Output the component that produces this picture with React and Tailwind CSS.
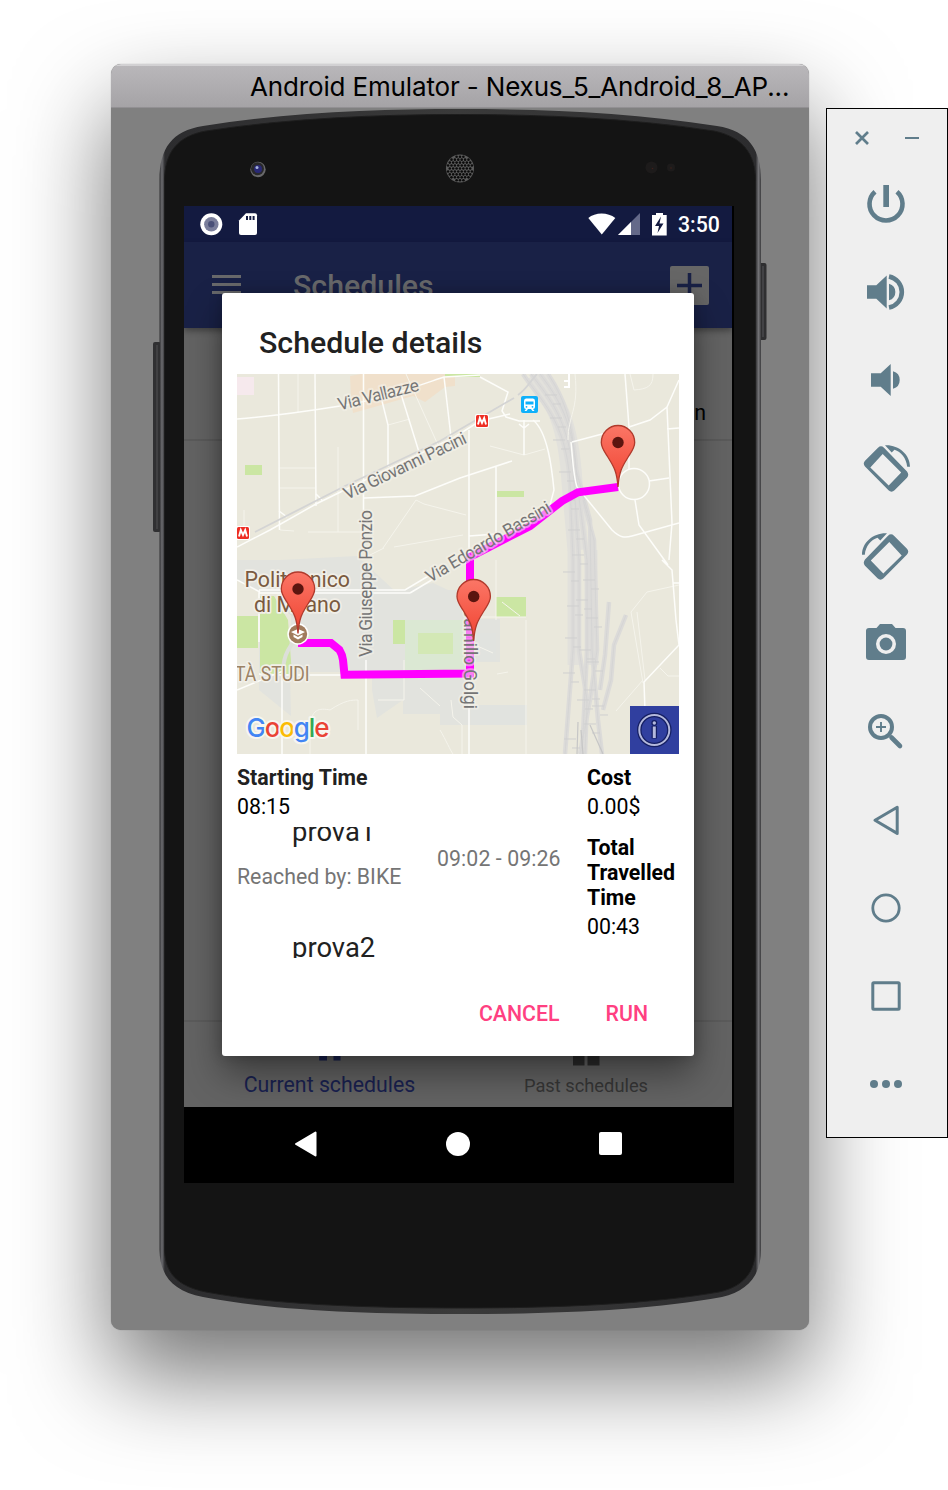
const steel = '#607d8b';

function Pin({ x, y }) {
  return (
    <g transform={`translate(${x} ${y})`}>
      <path d="M0 0C-1.2 -17 -5 -21.500 -10.500 -30.500C-14 -36 -16.700 -39.500 -16.700 -44.500A16.700 17 0 0 1 16.700 -44.500C16.700 -39.500 14 -36 10.500 -30.500C5 -21.500 1.200 -17 0 0Z" fill="url(#pin)" stroke="#b03a2c" strokeWidth="1.300" />
      <circle cx="0" cy="-44.500" r="5.700" fill="#5b150f" />
    </g>
  );
}

function Metro({ x, y }) {
  return (
    <g transform={`translate(${x} ${y})`}>
      <rect x="-7" y="-7" width="14" height="14" rx="2" fill="#fff" />
      <rect x="-6" y="-6" width="12" height="12" rx="1.500" fill="#ee2e24" />
      <path d="M-4 3.500L-2.200 -3L0 2L2.200 -3L4 3.500" fill="none" stroke="#fff" strokeWidth="1.900" />
    </g>
  );
}

function Rails() {
  const beds = [
    'M523 374C540 400 566 420 570 482L573 560V650L565 754',
    'M531 374C549 398 570 420 574 482L579 560V650L587 700L585 754',
    'M540 374C558 398 574 420 577 482L587 560V650L582 754',
    'M548 374C562 395 573 420 576 470L590 520L592 650L598 720L602 754',
    'M583 500L594 540L597 650L590 700L580 754',
    'M626 615L614 645L611 680L603 710',
    'M609 602L605 655L600 690',
  ];
  const ties = [[551, 395], [556, 418], [559, 440], [565, 472], [569, 500], [574, 530], [578, 555], [569, 572], [589, 580], [582, 600], [573, 606], [592, 618], [571, 638], [585, 650], [593, 662], [569, 673], [590, 690], [583, 700], [598, 706], [570, 739], [590, 724]];
  return (
    <g fill="none">
      <path d="M535 374C552 398 568 415 572 482L578 550" stroke="#e2e1dc" strokeWidth="21" />
      <path d="M574 550V665M591 550L592 665" stroke="#e2e1dc" strokeWidth="13" />
      {beds.map((d) => <path key={d} d={d} stroke="#dcdbd9" strokeWidth="4.500" />)}
      {beds.map((d) => <path key={d} d={d} stroke="#d3d3d3" strokeWidth=".8" />)}
      {ties.map(([x, y]) => <path key={`${x}-${y}`} d={`M${x - 6} ${y}h12M${x + 2} ${y + 9}h8`} stroke="#cfcfcf" strokeWidth="1" />)}
      <path d="M578 722L577 754M581 730L583 754M590 725L603 754" stroke="#c6c6c6" strokeWidth="1.200" />
    </g>
  );
}

const label = { fontFamily: 'Roboto, sans-serif', paintOrder: 'stroke', strokeLinejoin: 'round' };

function CityMap() {
  return (
    <svg className="block h-[380px] w-[442px]" viewBox="237 374 442 380">
      <defs>
        <linearGradient id="pin" x1="0" y1="0" x2="0" y2="1">
          <stop offset="0" stopColor="#fb7666" />
          <stop offset="1" stopColor="#f04331" />
        </linearGradient>
      </defs>
      <rect x="237" y="374" width="442" height="380" fill="#eae8dc" />
      <path d="M280 560L357 556L395 591L433 583L448 590H471V619H500V662H471V725H440V714H403V700L377 718L372 690V672H290L291 716L259 690V640H291V592H259L237 580V560Z" fill="#e2e3de" />
      <path d="M471 705H527V725H471ZM471 633H496V661H471Z" fill="#e1e3df" />
      <path d="M237 377H254V395H237Z" fill="#f6e9ed" />
      <path d="M350 376L361 374H455V386L445 387L425 402L413 396L353 413L351 399Z" fill="#f0e0cb" />
      <path d="M445 374H480V377H445ZM245 465H262V475H245ZM497 491H524V497H497ZM496 597H526V617H496ZM237 616H258V648H237ZM260 596H274L288 620L292 674H260ZM393 620H405V644H393Z" fill="#cbe6a3" />
      <path d="M405 620H464V672H405Z" fill="#dbe8d3" />
      <path d="M418 633H453V654H418Z" fill="#d3e8b5" />
      <path d="M283 600C287 617 300 612 298 625C299 645 283 643 283 674" fill="none" stroke="#dddfd9" strokeWidth="4" />
      <Rails />
      <g fill="none" stroke="#f5f4ec" strokeWidth="1">
        <path d="M298 374V412M338 447V532M280 468H315M280 488H315M244 510V532M280 530L294 531M308 532H363M406 374L438 445M388 425L410 419M383 548L416 500L424 504L466 515M394 547L463 535M384 548L366 557M490 446L524 455L545 449M575 374C579 410 568 415 568 440M630 374L634 390C648 389 653 386 653 374M404 660V700H378M420 688L440 706M310 754V730C310 708 320 708 330 710C345 700 352 700 358 700V730M440 730C446 740 450 750 453 754M497 674L508 672M526 620V754M496 560V620M526 617H475M502 602L520 616M616 711L643 680M679 585L647 592L631 612L643 683M637 612L645 680M660 668L668 676H679M451 700L453 717L462 725V754M475 645L493 653" />
      </g>
      <g fill="none" stroke="#fdfdfa" strokeWidth="1.500">
        <path d="M278.500 374L279.500 530M315 374L316 506M363.500 374V510M366 660V754M237 419C275 416 315 410 340 406C380 400 420 385 444 377L480 375M382 401L388 425V467M401 394L419 452M444 377L451 437M480 377L508 392L502 411L506 417L519 421L540 421" />
        <path d="M364 498L415 496L460 478L512 461M496 467V534L469 536M469 430V754M524 420V455M519 424L524 428L529 424M533 420C548 432 552 470 554 490L550 505M625 374L629 427V470M572 442L606 433M571 442C573 460 573 475 577 487L612 530C620 538 625 538 632 536L679 523M629 427L650 420L667 407L679 380M667 407L672 523L669 560M617 483L634 480M649 481L669 478M635 500L639 525L668 565M667 429L679 428M662 560L672 570L676 620L679 645L644 682L645 711M673 583H679" />
        <path d="M237 547L270 530L316 504L363 481L453 438L480 421L510 414M279 511L287 517M316 494L322 500M259 593H410M259 590H405L430 575M259 592V642M237 580L260 592M410 593L435 578M282 676V754M259 674L283 675H345M237 690L283 671" />
        <circle cx="634" cy="484" r="15.500" fill="#eae8dc" />
      </g>
      <path d="M255 532L345 486L440 441L514 398M518 395C528 388 530 381 537 374" fill="none" stroke="#d4d4d4" strokeWidth="1.800" />
      <path d="M569 374V387H564M564 381H569" fill="none" stroke="#fff" strokeWidth="2" />
      <path d="M298 643H331C340 650 342 655 343 660L344.500 675L470 673.500V560L560 499Q566 495 578 492.500L618 487.500" fill="none" stroke="none" />
      <path d="M298 643H331L339.500 650Q342.500 655 343 660L344.500 674.700L470 673.500V557L500 541.500L530 526L562 501L578 492.300L618 487" fill="none" stroke="#ff00ff" strokeWidth="8" />
      <g style={label} fill="#757575" stroke="#f4f2ea" strokeOpacity=".55" strokeWidth="4" fontSize="17.500">
        <text transform="translate(339.500 410.500) rotate(-14)" textLength="83">Via Vallazze</text>
        <text transform="translate(347 500) rotate(-25.500)" textLength="134">Via Giovanni Pacini</text>
        <text transform="translate(371.500 657) rotate(-90)" textLength="147">Via Giuseppe Ponzio</text>
        <text transform="translate(430 583) rotate(-30.500)" textLength="142">Via Edoardo Bassini</text>
        <text transform="translate(464 607) rotate(90)" textLength="102" lengthAdjust="spacingAndGlyphs">Camillo Golgi</text>
      </g>
      <g style={label} fontSize="21.500" stroke="#f1efe8" strokeWidth="3.500">
        <text x="244.500" y="586.500" textLength="105.500" lengthAdjust="spacingAndGlyphs" fill="#7a5a40">Politecnico</text>
        <text x="254" y="612" textLength="87" lengthAdjust="spacingAndGlyphs" fill="#7a5a40">di Milano</text>
        <text x="235" y="680.500" textLength="74.500" lengthAdjust="spacingAndGlyphs" fill="#9b8265" fontSize="20">TÀ STUDI</text>
      </g>
      <circle cx="298" cy="634" r="10.700" fill="#fff" />
      <circle cx="298" cy="634" r="9.200" fill="#a17c5e" />
      <path d="M291 632L298 629L305 632L298 635.500ZM293.500 634.500L298 637L302.500 634.500V637L298 639.500L293.500 637Z" fill="#fff" />
      <Metro x="243" y="533" />
      <Metro x="482" y="421" />
      <rect x="521" y="396" width="17" height="17" rx="2" fill="#0fb0fa" />
      <path d="M526 398.500H533Q535 398.500 535 401V407Q535 409 533 409L534.500 411H532.500L531 409H528L526.500 411H524.500L526 409Q524 409 524 407V401Q524 398.500 526 398.500Z" fill="#fff" />
      <path d="M525.500 401.500H533.500V404.500H525.500Z" fill="#0fb0fa" />
      <circle cx="526.500" cy="406.800" r=".9" fill="#0fb0fa" />
      <circle cx="532.500" cy="406.800" r=".9" fill="#0fb0fa" />
      <Pin x={618} y={487} />
      <Pin x={298} y={633.500} />
      <Pin x={473.700} y={641} />
      <text x="246.500" y="737" fontSize="26" fontWeight="500" textLength="83" style={{ ...label, fontFamily: 'Inter, sans-serif' }} stroke="#f7f6f0" strokeWidth="4">
        <tspan fill="#4285f4">G</tspan><tspan fill="#ea4335">o</tspan><tspan fill="#fbbc05">o</tspan><tspan fill="#4285f4">g</tspan><tspan fill="#34a853">l</tspan><tspan fill="#ea4335">e</tspan>
      </text>
      <rect x="630" y="706" width="49" height="48" fill="#303f9f" />
      <g fill="none" stroke="#151f63">
        <circle cx="654.300" cy="730" r="15" strokeWidth="4.500" />
        <path d="M654.300 726V738.500" strokeWidth="5.500" />
        <circle cx="654.300" cy="723" r="2" strokeWidth="2" />
      </g>
      <circle cx="654.300" cy="730" r="15" fill="none" stroke="#b4b9dc" strokeWidth="2" />
      <path d="M654.300 726.500V738" stroke="#b4b9dc" strokeWidth="3" />
      <circle cx="654.300" cy="723" r="1.700" fill="#b4b9dc" />
    </svg>
  );
}

function PhoneBody() {
  const holes = [];
  for (let r = -4; r <= 4; r++) {
    for (let c = -4; c <= 4; c++) {
      const x = c * 3.4 + (r % 2 ? 1.7 : 0);
      const y = r * 2.95;
      if (x * x + y * y < 160) holes.push([460 + x, 168.5 + y]);
    }
  }
  return (
    <svg className="absolute inset-0 h-full w-full" viewBox="111 108 698 1222">
      <defs>
        <linearGradient id="rim" x1="0" y1="0" x2="1" y2="0">
          <stop offset="0" stopColor="#303032" />
          <stop offset=".004" stopColor="#6c6c70" />
          <stop offset=".009" stopColor="#2c2c2e" />
          <stop offset=".5" stopColor="#3a3a3a" />
          <stop offset=".991" stopColor="#2c2c2e" />
          <stop offset=".996" stopColor="#747478" />
          <stop offset="1" stopColor="#3a3a3c" />
        </linearGradient>
      </defs>
      <rect x="153" y="342" width="8" height="190" rx="2" fill="#303032" />
      <path d="M157 345V529" stroke="#515153" />
      <rect x="759" y="263" width="7.500" height="77" rx="2" fill="#2f2f31" />
      <path d="M763 266V337" stroke="#57575a" />
      <path d="M159.500 180C159.500 148 172 131 203 126C290 112 380 109 460 109C540 109 630 112 717 126C749 131 761 150 761 180V1250C761 1275 748 1291 722 1297C650 1310 560 1314 460 1314C360 1314 270 1310 203 1297C172 1291 160 1275 159.500 1250Z" fill="url(#rim)" />
      <path d="M164.500 181C164.500 152 178 136 206 131C290 118 380 114.500 460 114.500C540 114.500 630 118 714 131C742 137 755.500 153 755.500 181V1249C755.500 1273 742 1287 719 1292C650 1304 560 1308 460 1308C360 1308 270 1304 206 1292C177 1286 165 1273 164.500 1249Z" fill="#141414" stroke="#1e1e1e" />
      <circle cx="258" cy="169.500" r="7.700" fill="#68686a" />
      <circle cx="257.500" cy="168.700" r="6.500" fill="#29292b" />
      <circle cx="258" cy="169" r="4" fill="#292975" />
      <circle cx="257" cy="167.500" r="1.500" fill="#a8b4dd" />
      <circle cx="460" cy="168.500" r="14" fill="#5c5c5c" />
      {holes.map(([x, y]) => <circle key={`${x}-${y}`} cx={x} cy={y} r="1.300" fill="#0b0b0b" />)}
      <circle cx="651.500" cy="167.500" r="6" fill="#1d1b1b" />
      <circle cx="671" cy="167.500" r="4" fill="#1d1b1b" />
      <circle cx="652.500" cy="168.500" r=".8" fill="#3e201b" />
      <circle cx="671" cy="168" r=".8" fill="#3e201b" />
    </svg>
  );
}

const rotateDevice = (
  <>
    <path fillRule="evenodd" d="M-8 -20.300Q-5 -23 -2 -20.300L21 3.500Q23.500 6.800 21 9.800L8.500 22.300Q5.500 25 2.500 22.300L-21 -1.500Q-23.500 -4.500 -21 -7.300ZM-3.300 -14L-15.700 -0.500L2.700 17.500L15.200 4.500Z" />
    <path d="M-1 -22.700C12 -23.500 24 -14 24 -1.300H21.200C20.300 -10 15 -16.500 8.500 -18.300L5.700 -15.600Z" />
  </>
);

const tools = [
  ['Power', <><path d="M-11 -12.300A16.500 16.500 0 1 0 11 -12.300" fill="none" stroke={steel} strokeWidth="4.600" /><path d="M-2.700 -19H3V3H-2.700Z" /></>],
  ['Volume up', <><path d="M-19 -6.700H-9.700L.7 -16.500V16.500L-9.700 6.800H-19ZM3 -8.300A8.600 8.600 0 0 1 3 8.300Z" /><path d="M3 -15.600A15.900 15.900 0 0 1 3 15.600" fill="none" stroke={steel} strokeWidth="4.600" /></>],
  ['Volume down', <path d="M-15 -6.700H-5.300L4.700 -16V16L-5.300 6.700H-15ZM7 -8.700A9 9 0 0 1 7 8.700Z" />],
  ['Rotate left', rotateDevice],
  ['Rotate right', <g transform="scale(-1 1)">{rotateDevice}</g>],
  ['Screenshot', <><path fillRule="evenodd" d="M-17 -16H-9.500L-6 -20H6L9.500 -16H17Q20 -16 20 -13V13Q20 16 17 16H-17Q-20 16 -20 13V-13Q-20 -16 -17 -16ZM0 -10A10 10 0 1 0 0 10A10 10 0 1 0 0 -10Z" /><circle r="6.400" /></>],
  ['Zoom', <g fill="none" stroke={steel}><circle cx="-5" cy="-5" r="11" strokeWidth="4" /><path d="M-10 -5H0M-5 -10V0" strokeWidth="1.900" /><path d="M5.500 5.500L14 14" strokeWidth="4.600" strokeLinecap="round" /></g>],
  ['Back', <path d="M-11 .2L11.200 -12.800V13.400Z" fill="none" stroke={steel} strokeWidth="3" strokeLinejoin="round" />],
  ['Home', <circle r="13.200" fill="none" stroke={steel} strokeWidth="2.800" />],
  ['Overview', <rect x="-13.200" y="-13.200" width="26.400" height="26.400" rx="1" fill="none" stroke={steel} strokeWidth="3" />],
  ['More', <><circle cx="-12" r="4" /><circle r="4" /><circle cx="12" r="4" /></>],
];

function ToolPanel() {
  return (
    <aside className="mt-[44px] flex h-[1030px] w-[122px] flex-none flex-col border border-black bg-[#efefef]">
      <div className="flex h-[51px] items-center justify-center gap-[36px] pt-[6px]">
        <svg className="size-[14px]" viewBox="0 0 14 14"><path d="M1 1L13 13M13 1L1 13" stroke={steel} strokeWidth="2.700" /></svg>
        <svg className="h-[14px] w-[14px]" viewBox="0 0 14 14"><path d="M0 7H14" stroke={steel} strokeWidth="2" /></svg>
      </div>
      {tools.map(([name, art]) => (
        <button key={name} className="flex h-[88px] flex-none items-center justify-center pr-[2px]">
          <svg className="size-[50px]" viewBox="-25 -25 50 50" fill={steel}>{art}</svg>
        </button>
      ))}
    </aside>
  );
}

function StatusBar() {
  return (
    <div className="flex h-[36px] w-[548px] items-center bg-[#131a40] pl-[16px] pr-[12px]">
      <svg className="h-[36px] w-[60px]" viewBox="200 206 60 36">
        <circle cx="211.300" cy="224.300" r="11" fill="#fff" />
        <circle cx="211.300" cy="224.300" r="7.200" fill="#7a7e9b" />
        <circle cx="211.300" cy="224.300" r="3.200" fill="#4a5078" />
        <path d="M246 213.300H255Q257 213.300 257 215.300V233Q257 235 255 235H241Q239 235 239 233V220.500Z" fill="#fff" />
        <path d="M247 216V220M250.300 216V220M253.600 216V220" stroke="#131a40" strokeWidth="2" />
      </svg>
      <svg className="ml-auto h-[36px] w-[82px]" viewBox="588 206 82 36">
        <path d="M588.300 218C595 212 608 212 615.300 218L601.800 234.500Z" fill="#fff" />
        <path d="M640 213V235H618Z" fill="#646989" />
        <path d="M631 222V235H618Z" fill="#fff" />
        <path d="M652 215H656V213H663V215H666.700V235.500H652Z" fill="#fff" />
        <path d="M661 216.500L655 226H659L657.500 233L663.500 223.500H659.500Z" fill="#131a40" />
      </svg>
      <span className="ml-[8px] w-[42px] whitespace-nowrap pt-[2px] text-[21.300px] font-medium leading-[34px] text-white">3:50</span>
    </div>
  );
}

function ScheduleDialog() {
  return (
    <div className="absolute left-[38px] top-[87px] flex h-[763px] w-[472px] flex-col rounded-[3px] bg-white px-[15px] text-[21.300px] leading-[25px] text-black shadow-[0_18px_36px_rgba(0,0,0,0.4),0_0_14px_rgba(0,0,0,0.2)]">
      <h2 className="pb-[13px] pl-[22px] pt-[32px] text-[30.300px] font-medium leading-[36px] text-[#212121]">Schedule details</h2>
      <CityMap />
      <div className="flex pt-[11px]">
        <div className="w-[350px] flex-none">
          <div className="font-bold text-[#212121]">Starting Time</div>
          <div className="mt-[4px]">08:15</div>
          <div className="mt-[8px] h-[131px] overflow-hidden">
            <div className="-mt-[11px] flex text-[#757575]">
              <div className="w-[200px]">
                <div className="pl-[55px] text-[27.400px] leading-[32px] text-[#212121]">prova1</div>
                <div className="mt-[16px]">Reached by: BIKE</div>
                <div className="mt-[43px] pl-[55px] text-[27.400px] leading-[32px] text-[#212121]">prova2</div>
              </div>
              <div className="whitespace-nowrap pt-[30px] tracking-[0.080px]">09:02 - 09:26</div>
            </div>
          </div>
        </div>
        <div className="w-[92px]">
          <div className="font-bold">Cost</div>
          <div className="mt-[4px]">0.00$</div>
          <div className="mt-[16px] font-bold">Total Travelled Time</div>
          <div className="mt-[4px]">00:43</div>
        </div>
      </div>
      <div className="mt-auto flex justify-end gap-[46px] pb-[30px] pr-[31px] font-medium text-[#ff4081]">
        <button>CANCEL</button>
        <button>RUN</button>
      </div>
    </div>
  );
}

function Screen() {
  return (
    <div className="relative ml-[73px] mt-[98px] h-[977px] w-[550px] overflow-hidden bg-black">
      <StatusBar />
      <div className="relative z-10 flex h-[86px] w-[548px] items-center bg-[#192146] pl-[28px] pr-[23px] shadow-[0_3px_6px_rgba(0,0,0,0.35)]">
        <svg className="h-[22px] w-[29px]" viewBox="0 0 29 22"><path d="M0 2.500H29M0 10.500H29M0 18.500H29" stroke="#68696b" strokeWidth="3" /></svg>
        <span className="ml-[52px] pt-[2px] text-[30.300px] font-medium text-[#68696b]">Schedules</span>
        <svg className="ml-auto h-[39px] w-[39px]" viewBox="0 0 39 39"><rect width="39" height="39" rx="2" fill="#666" /><path d="M7 19.500H32M19.500 7V32" stroke="#192146" strokeWidth="3.500" /></svg>
      </div>
      <div className="h-[692px] w-[548px] bg-[#636363]">
        <div className="flex h-[113px] items-center justify-end border-b-2 border-[#5a5a5a] pr-[26px] pt-[59px] text-[21.300px] text-black">n</div>
      </div>
      <div className="flex h-[87px] w-[548px] border-t-2 border-[#5b5b5b] bg-[#636363]">
        <div className="flex w-[291px] flex-col items-center pt-[20px] text-[21.300px] leading-[26px] text-[#192150]">
          <svg className="h-[20px] w-[28px]" viewBox="0 0 28 20"><path d="M3.200 0H11V18.500H3.200ZM17.500 0H24.500V18.500H17.500Z" fill="#192150" /></svg>
          <span className="mt-[10px]">Current schedules</span>
        </div>
        <div className="flex w-[222px] flex-col items-center pt-[16px] text-[18.300px] leading-[26px] text-[#363636]">
          <svg className="h-[28px] w-[28px]" viewBox="0 0 28 28"><path d="M0 5H12V15H0ZM15.500 5H28V15H15.500ZM1 18H12.500V27.500H1ZM15.500 18H27.500V27.500H15.500Z" fill="#2c2c2c" /></svg>
          <span className="mt-[7px]">Past schedules</span>
        </div>
      </div>
      <div className="flex h-[73px] items-center bg-black pl-[111px]">
        <svg className="h-[26px] w-[22px]" viewBox="0 0 22 26"><path d="M1 13L20.500 1.500V24.500Z" fill="#fff" stroke="#fff" strokeWidth="2" strokeLinejoin="round" /></svg>
        <span className="ml-[129px] size-[24px] rounded-full bg-white" />
        <span className="ml-[129px] size-[23px] rounded-[2px] bg-white" />
      </div>
      <div className="absolute inset-0 z-20"><ScheduleDialog /></div>
    </div>
  );
}

export default function App() {
  return (
    <main className="flex h-[1490px] w-[948px] items-start overflow-hidden bg-white pl-[111px] pt-[64px] font-['Roboto',sans-serif]">
      <section className="mr-[17px] flex h-[1266px] w-[698px] flex-none flex-col overflow-hidden rounded-[10px] bg-[#808080] shadow-[0_45px_95px_rgba(0,0,0,0.55),0_0_1px_rgba(0,0,0,0.4)]">
        <header className="h-[44px] flex-none border-b border-[#929093] border-t-2 border-t-[#d2d1d3] bg-linear-to-b from-[#b9b7ba] to-[#a5a3a6] pl-[139px] font-['Inter',sans-serif] text-[26px] leading-[41px] text-black">
          <span className="whitespace-nowrap tracking-[-0.150px]">Android Emulator - Nexus_5_Android_8_AP...</span>
        </header>
        <div className="relative h-[1222px]">
          <PhoneBody />
          <div className="flex"><Screen /></div>
        </div>
      </section>
      <ToolPanel />
    </main>
  );
}
